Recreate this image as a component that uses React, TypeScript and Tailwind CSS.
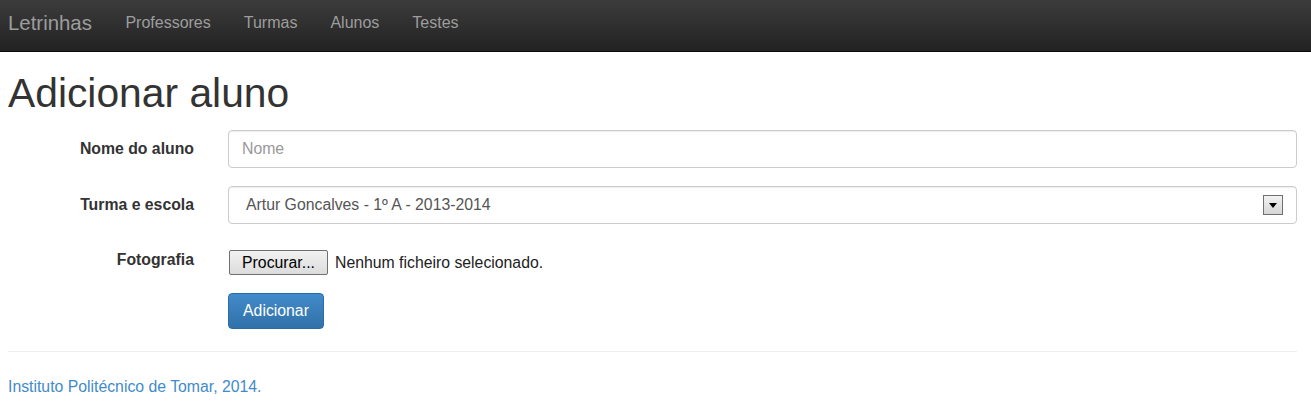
import React from "react";

const links = ["Professores", "Turmas", "Alunos", "Testes"];

function SelectArrow() {
  return (
    <span className="flex h-[20px] w-[20px] items-center justify-center border border-[#707070] bg-gradient-to-b from-[#f2f2f2] to-[#d6d6d6]">
      <svg width="8" height="5" viewBox="0 0 8 5">
        <polygon points="0,0 8,0 4,5" fill="#000" />
      </svg>
    </span>
  );
}

export default function App() {
  return (
    <div className="min-h-[409px] bg-white font-['Liberation_Sans',Arial,sans-serif] text-[15.8px] text-[#333]">
      {/* navbar */}
      <header className="flex h-[52px] items-start border-b border-[#080808] bg-gradient-to-b from-[#3c3c3c] to-[#222] pl-2 pt-[12px]">
        <span className="text-[20.4px] leading-[22px] text-[#9d9d9d]">Letrinhas</span>
        <nav className="ml-[17px] flex">
          {links.map((l) => (
            <span key={l} className="px-[16.5px] text-[16px] leading-[22px] text-[#9d9d9d]">
              {l}
            </span>
          ))}
        </nav>
      </header>

      <main className="pl-2 pr-[14px]">
        <h1 className="mt-[19px] text-[40.8px] leading-[44px] text-[#333]">Adicionar aluno</h1>

        <form className="mt-[15px] flex flex-col gap-[18px]">
          <div className="flex items-center">
            <label className="w-[186px] text-right font-bold">Nome do aluno</label>
            <input
              placeholder="Nome"
              className="ml-[34px] h-[38px] flex-1 rounded-[4px] border border-[#ccc] px-[13px] text-[15.8px] text-[#555] shadow-[inset_0_1px_1px_rgba(0,0,0,0.075)] outline-none placeholder:text-[#999]"
            />
          </div>

          <div className="flex items-center">
            <label className="w-[186px] text-right font-bold">Turma e escola</label>
            <div className="ml-[34px] flex h-[38px] flex-1 items-center justify-between rounded-[4px] border border-[#ccc] pl-[17px] pr-[13px] text-[#555] shadow-[inset_0_1px_1px_rgba(0,0,0,0.075)]">
              <span>Artur Goncalves - 1º A - 2013-2014</span>
              <SelectArrow />
            </div>
          </div>

          <div className="flex items-start">
            <label className="w-[186px] pt-[6px] text-right font-bold">Fotografia</label>
            <div className="ml-[35px] mt-[8px] flex items-center">
              <span className="flex h-[25px] w-[99px] items-center justify-center rounded-[2px] border border-[#707070] bg-gradient-to-b from-[#f2f2f2] to-[#dcdcdc] text-[#000]">
                Procurar...
              </span>
              <span className="ml-[7px] text-[#222]">Nenhum ficheiro selecionado.</span>
            </div>
          </div>

          <div className="flex">
            <span className="ml-[220px] flex h-[36px] w-[96px] items-center justify-center rounded-[4px] border border-[#2d6ca2] bg-gradient-to-b from-[#428bca] to-[#3071a9] text-white">
              Adicionar
            </span>
          </div>
        </form>

        <hr className="mt-[22px] border-t border-[#eee]" />

        <footer className="mt-[23px] text-[#428bca]">Instituto Politécnico de Tomar, 2014.</footer>
      </main>
    </div>
  );
}
